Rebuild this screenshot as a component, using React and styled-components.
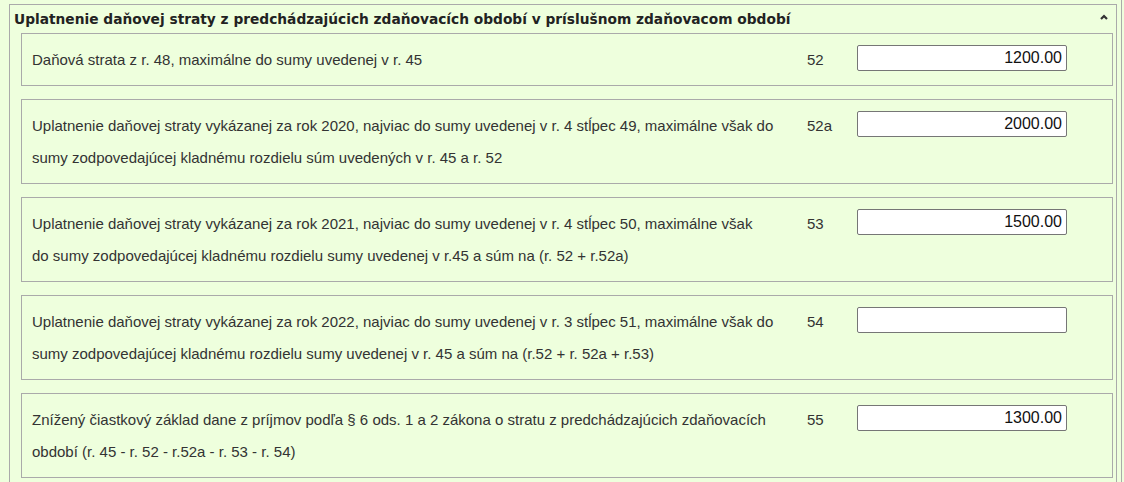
import React from "react";
import styled, { createGlobalStyle } from "styled-components";

const GlobalStyle = createGlobalStyle`
  html, body {
    margin: 0;
    padding: 0;
    background: #eeffdd;
  }
  body {
    font-family: "Liberation Sans", Arial, sans-serif;
    color: #333;
  }
  * { box-sizing: border-box; }
`;

const Page = styled.div`
  width: 1122px;
  min-height: 100vh;
  border-right: 1px solid #aaa;
  padding: 4px 0 0 9px;
`;

const Section = styled.section`
  width: 1108px;
  border: 1px solid #aaa;
  border-bottom: none;
  min-height: 500px;
`;

const Header = styled.div`
  height: 28px;
  padding: 0 8px 0 4px;
  display: flex;
  align-items: center;
  justify-content: space-between;
`;

const Title = styled.h3`
  margin: 0;
  font-family: "DejaVu Sans", Verdana, sans-serif;
  font-weight: bold;
  font-size: 13.75px;
  line-height: 28px;
  color: #222;
  white-space: nowrap;
`;

const Toggle = styled.span`
  display: flex;
  width: 8px;
  height: 6px;
  margin-top: -4px;
  color: #333;
`;

const Rows = styled.div`
  display: flex;
  flex-direction: column;
  gap: 13px;
  padding: 0 3px 0 11px;
`;

const Row = styled.div`
  border: 1px solid #aaa;
  padding: 10px 10px 9px;
  display: grid;
  grid-template-columns: 775px 50px 210px;
  align-items: start;
`;

const Label = styled.div`
  font-size: 15px;
  line-height: 32px;
`;

const Code = styled.div`
  font-size: 15px;
  line-height: 32px;
`;

const Amount = styled.input`
  width: 210px;
  height: 26px;
  margin-top: 1px;
  border: 1px solid #767676;
  border-radius: 2px;
  background: #fff;
  padding: 1px 4px;
  font-family: "Liberation Sans", Arial, sans-serif;
  font-size: 16px;
  color: #111;
  text-align: right;
  outline: none;
`;

const rows = [
  {
    lines: ["Daňová strata z r. 48, maximálne do sumy uvedenej v r. 45"],
    code: "52",
    value: "1200.00",
  },
  {
    lines: [
      "Uplatnenie daňovej straty vykázanej za rok 2020, najviac do sumy uvedenej v r. 4 stĺpec 49, maximálne však do",
      "sumy zodpovedajúcej kladnému rozdielu súm uvedených v r. 45 a r. 52",
    ],
    code: "52a",
    value: "2000.00",
  },
  {
    lines: [
      "Uplatnenie daňovej straty vykázanej za rok 2021, najviac do sumy uvedenej v r. 4 stĺpec 50, maximálne však",
      "do sumy zodpovedajúcej kladnému rozdielu sumy uvedenej v r.45 a súm na (r. 52 + r.52a)",
    ],
    code: "53",
    value: "1500.00",
  },
  {
    lines: [
      "Uplatnenie daňovej straty vykázanej za rok 2022, najviac do sumy uvedenej v r. 3 stĺpec 51, maximálne však do",
      "sumy zodpovedajúcej kladnému rozdielu sumy uvedenej v r. 45 a súm na (r.52 + r. 52a + r.53)",
    ],
    code: "54",
    value: "",
  },
  {
    lines: [
      "Znížený čiastkový základ dane z príjmov podľa § 6 ods. 1 a 2 zákona o stratu z predchádzajúcich zdaňovacích",
      "období (r. 45 - r. 52 - r.52a - r. 53 - r. 54)",
    ],
    code: "55",
    value: "1300.00",
  },
];

function ChevronUp() {
  return (
    <svg width="8" height="6" viewBox="0 0 8 6" aria-hidden="true">
      <path d="M1 5 L4 2 L7 5" fill="none" stroke="currentColor" strokeWidth="2.2" strokeLinejoin="miter" />
    </svg>
  );
}

export default function App() {
  return (
    <>
      <GlobalStyle />
      <Page>
        <Section>
          <Header>
            <Title>Uplatnenie daňovej straty z predchádzajúcich zdaňovacích období v príslušnom zdaňovacom období</Title>
            <Toggle>
              <ChevronUp />
            </Toggle>
          </Header>
          <Rows>
            {rows.map((r) => (
              <Row key={r.code}>
                <Label>
                  {r.lines.map((l, i) => (
                    <React.Fragment key={i}>
                      {i > 0 && <br />}
                      {l}
                    </React.Fragment>
                  ))}
                </Label>
                <Code>{r.code}</Code>
                <Amount type="text" defaultValue={r.value} />
              </Row>
            ))}
          </Rows>
        </Section>
      </Page>
    </>
  );
}
